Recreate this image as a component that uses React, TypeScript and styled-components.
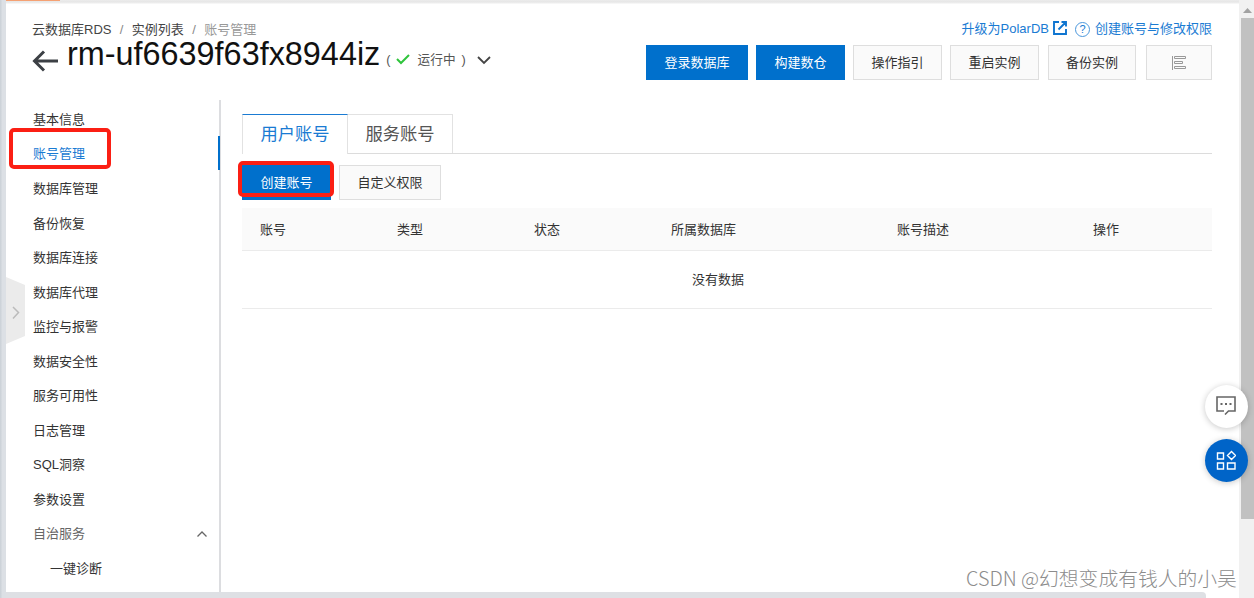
import React from 'react';
import styled, { createGlobalStyle, css } from 'styled-components';

const GlobalStyle = createGlobalStyle`
  * { box-sizing: border-box; }
  body {
    margin: 0;
    overflow: hidden;
    background: #fff;
    color: #333;
    font: 13px/18px "Liberation Sans", "Noto Sans CJK SC", sans-serif;
  }
`;

const Page = styled.div`
  position: relative;
  display: grid;
  grid-template-columns: 6px 1233px 15px;
  width: 1254px;
  height: 598px;
  overflow: hidden;
`;

const LeftRail = styled.div`
  background: linear-gradient(90deg, #cdd3d9 0, #cdd3d9 1px, #dce0e5 2px);
`;

const Main = styled.div`
  display: flex;
  flex-direction: column;
  min-width: 0;
`;

const TopEdge = styled.div`
  height: 4px;
  flex: none;
  background: linear-gradient(#ececec 0, #e6e6e6 2px, #fbfbfb 4px);
  &::before {
    content: '';
    display: block;
    width: 54px;
    height: 1px;
    background: #f5a173;
  }
`;

const Header = styled.header`
  display: flex;
  justify-content: space-between;
  height: 96px;
  flex: none;
  padding: 0 27px 0 26px;
`;

const HeaderInfo = styled.div`
  padding-top: 17px;
`;

const Breadcrumb = styled.nav`
  display: flex;
  height: 18px;
`;

const Crumb = styled.span<{ $last?: boolean }>`
  color: ${p => (p.$last ? '#999' : '#444')};
`;

const Slash = styled.span`
  width: 20.4px;
  text-align: center;
  color: #888;
`;

const TitleRow = styled.div`
  display: flex;
  height: 38px;
  svg { flex: none; }
`;

const BackIcon = styled.svg`
  margin-top: 11px;
`;

const Title = styled.h1`
  margin: -4px 0 0 9px;
  font-size: 32.4px;
  line-height: 38px;
  font-weight: 400;
  color: #111;
`;

const Status = styled.div`
  display: flex;
  align-items: center;
  height: 18px;
  margin: 12px 0 0 6px;
  font-size: 12.7px;
  color: #555;
  svg:first-of-type { margin: 0 8px 0 5px; }
  svg:last-of-type { margin-left: 11px; }
`;

const CloseParen = styled.span`
  margin-left: 6px;
`;

const HeaderActions = styled.div`
  display: flex;
  flex-direction: column;
  align-items: flex-end;
  padding-top: 16px;
`;

const Links = styled.div`
  display: flex;
  align-items: center;
  height: 18px;
  color: #1a7bd3;
  white-space: nowrap;
`;

const ExternalIcon = styled.svg`
  margin: -2px 8px 0 4px;
`;

const HelpIcon = styled.span`
  width: 15px;
  height: 15px;
  margin-right: 5px;
  border: 1px solid #4b97dc;
  border-radius: 50%;
  font-size: 11px;
  line-height: 13px;
  text-align: center;
`;

const ButtonRow = styled.div`
  display: flex;
  gap: 8px;
  margin-top: 7px;
`;

const Button = styled.button<{ $primary?: boolean; $width: number; $shift?: number }>`
  display: flex;
  align-items: center;
  justify-content: center;
  width: ${p => p.$width}px;
  height: 35px;
  margin: 0 0 0 ${p => p.$shift ?? 0}px;
  padding: 0;
  border: 1px solid #dedede;
  background: #fafafa;
  color: #333;
  font: inherit;
  ${p => p.$primary && css`
    border-color: #0070cc;
    background: #0070cc;
    color: #fff;
  `}
`;

const Body = styled.div`
  display: flex;
  flex: 1;
  min-height: 0;
`;

const Sidebar = styled.aside`
  width: 215px;
  padding-top: 2.6px;
  border-right: 2px solid #dcdde0;
`;

const NavItem = styled.a<{ $active?: boolean; $group?: boolean; $nested?: boolean }>`
  position: relative;
  display: flex;
  align-items: center;
  justify-content: space-between;
  height: 34.55px;
  padding: 0 11px 0 ${p => (p.$nested ? 44 : 27)}px;
  color: ${p => (p.$active ? '#1a7bd3' : p.$group ? '#666' : '#333')};
  ${p => p.$active && css`
    &::after {
      content: '';
      position: absolute;
      right: -1px;
      top: -1px;
      width: 2px;
      height: 34px;
      background: #0070cc;
    }
  `}
`;

const Content = styled.main`
  flex: 1;
  padding: 14px 27px 0 21px;
`;

const Tabs = styled.div`
  display: flex;
  height: 40px;
  border-bottom: 1px solid #dcdcdc;
`;

const Tab = styled.div<{ $active?: boolean }>`
  width: ${p => (p.$active ? 106 : 105)}px;
  height: ${p => (p.$active ? 40 : 39)}px;
  border: 1px solid #e2e2e2;
  border-width: 1px 1px 0 ${p => (p.$active ? 1 : 0)}px;
  border-top-color: ${p => (p.$active ? '#1a7bd3' : '#e2e2e2')};
  background: #fff;
  color: ${p => (p.$active ? '#1a7bd3' : '#555')};
  font-size: 17.3px;
  line-height: 39px;
  text-align: center;
`;

const Toolbar = styled.div`
  display: flex;
  gap: 8px;
  margin: 11px 0 8px;
`;

const Table = styled.table`
  width: 970px;
  table-layout: fixed;
  border-collapse: separate;
  border-spacing: 0;
`;

const HeadCell = styled.th<{ $width: number }>`
  width: ${p => p.$width}px;
  height: 43px;
  padding: 1px 0 0 18px;
  border-bottom: 1px solid #ebebeb;
  background: #fafafa;
  font-weight: 400;
  text-align: left;
`;

const EmptyCell = styled.td`
  height: 58px;
  padding: 0 18px 0 0;
  border-bottom: 1px solid #ebebeb;
  text-align: center;
`;

const BottomBar = styled.div`
  width: 1200px;
  height: 6px;
  flex: none;
  border-radius: 0 4px 0 0;
  background: #dee0e4;
`;

const Scrollbar = styled.div`
  display: flex;
  flex-direction: column;
  padding: 2px 0 0 2px;
  background: #f1f1f1;
`;

const ScrollArrow = styled.svg`
  flex: none;
`;

const ScrollThumb = styled.div`
  height: 501px;
  background: #c1c1c1;
`;

const Marker = styled.div<{ $x: number; $y: number; $w: number; $h: number }>`
  position: absolute;
  left: ${p => p.$x}px;
  top: ${p => p.$y}px;
  width: ${p => p.$w}px;
  height: ${p => p.$h}px;
  border: 4px solid #fb1f14;
  border-radius: 5px;
`;

const DrawerHandle = styled.svg`
  position: absolute;
  left: 6px;
  top: 277px;
`;

const Floating = styled.div<{ $primary?: boolean }>`
  position: absolute;
  left: 1205px;
  top: ${p => (p.$primary ? 439 : 385)}px;
  display: flex;
  align-items: center;
  justify-content: center;
  width: 43px;
  height: 43px;
  padding: 0 1px 2px 0;
  border-radius: 50%;
  background: ${p => (p.$primary ? '#0064c8' : '#fff')};
  box-shadow: 0 1px 6px rgba(0, 0, 0, 0.22);
`;

const Watermark = styled.div`
  position: absolute;
  left: 966px;
  top: 566px;
  font-family: "Noto Sans CJK SC", sans-serif;
  font-size: 19.8px;
  font-weight: 300;
  line-height: 24px;
  white-space: nowrap;
  color: #8c8c8c;
`;

const navItems = [
  '基本信息', '账号管理', '数据库管理', '备份恢复', '数据库连接', '数据库代理', '监控与报警',
  '数据安全性', '服务可用性', '日志管理', 'SQL洞察', '参数设置', '自治服务', '一键诊断',
];

const columns: [string, number][] = [
  ['账号', 137], ['类型', 137], ['状态', 137], ['所属数据库', 226], ['账号描述', 196], ['操作', 137],
];

export default function App() {
  return (
    <>
      <GlobalStyle />
      <Page>
        <LeftRail />
        <Main>
          <TopEdge />
          <Header>
            <HeaderInfo>
              <Breadcrumb>
                <Crumb>云数据库RDS</Crumb>
                <Slash>/</Slash>
                <Crumb>实例列表</Crumb>
                <Slash>/</Slash>
                <Crumb $last>账号管理</Crumb>
              </Breadcrumb>
              <TitleRow>
                <BackIcon width="26" height="22" fill="none" stroke="#3c4045" strokeWidth="3">
                  <path d="M26 11H2M12 1.500 2.500 11l9.500 9.500" />
                </BackIcon>
                <Title>rm-uf6639f63fx8944iz</Title>
                <Status>
                  <span>(</span>
                  <svg width="14" height="12" fill="none" stroke="#2fc43c" strokeWidth="2">
                    <path d="M1 5 5 9l8-8" />
                  </svg>
                  <span>运行中</span>
                  <CloseParen>)</CloseParen>
                  <svg width="14" height="10" fill="none" stroke="#444" strokeWidth="1.8">
                    <path d="m1 2 6 6 6-6" />
                  </svg>
                </Status>
              </TitleRow>
            </HeaderInfo>
            <HeaderActions>
              <Links>
                <span>升级为PolarDB</span>
                <ExternalIcon width="14" height="14" fill="none" stroke="#0f75d0" strokeWidth="1.9">
                  <path d="M6 1H1v12h12V8M8.500 1H13v4.500M13 1 5.500 8.500" />
                </ExternalIcon>
                <HelpIcon>?</HelpIcon>
                <span>创建账号与修改权限</span>
              </Links>
              <ButtonRow>
                <Button $primary $width={102}>登录数据库</Button>
                <Button $primary $width={89}>构建数仓</Button>
                <Button $width={89}>操作指引</Button>
                <Button $width={89}>重启实例</Button>
                <Button $width={88} $shift={1}>备份实例</Button>
                <Button $width={66} $shift={2}>
                  <svg width="14" height="14" fill="none" stroke="#999">
                    <path d="M.500 0v14M2.500 .500h11v2h-11zM2.500 5.500h8v2h-8zM2.500 10.500h11v2h-11z" />
                  </svg>
                </Button>
              </ButtonRow>
            </HeaderActions>
          </Header>
          <Body>
            <Sidebar>
              {navItems.map((label, i) => (
                <NavItem key={label} $active={i === 1} $group={i === 12} $nested={i === 13}>
                  {label}
                  {i === 12 && (
                    <svg width="12" height="8" fill="none" stroke="#666" strokeWidth="1.3">
                      <path d="m1.500 6.500 4.500-4.500 4.500 4.500" />
                    </svg>
                  )}
                </NavItem>
              ))}
            </Sidebar>
            <Content>
              <Tabs>
                <Tab $active>用户账号</Tab>
                <Tab>服务账号</Tab>
              </Tabs>
              <Toolbar>
                <Button $primary $width={89}>创建账号</Button>
                <Button $width={102}>自定义权限</Button>
              </Toolbar>
              <Table>
                <thead>
                  <tr>
                    {columns.map(([label, width]) => (
                      <HeadCell key={label} $width={width}>{label}</HeadCell>
                    ))}
                  </tr>
                </thead>
                <tbody>
                  <tr>
                    <EmptyCell colSpan={6}>没有数据</EmptyCell>
                  </tr>
                </tbody>
              </Table>
            </Content>
          </Body>
          <BottomBar />
        </Main>
        <Scrollbar>
          <ScrollArrow width="13" height="16">
            <path d="M2 11h9L6.500 6z" fill="#a2a2a2" />
          </ScrollArrow>
          <ScrollThumb />
        </Scrollbar>
        <DrawerHandle width="19" height="67">
          <path d="M0 0 19 8v51L0 67z" fill="#ebebeb" />
          <path d="m7 30 5.500 5.500L7 41.500" fill="none" stroke="#bbb" strokeWidth="1.5" />
        </DrawerHandle>
        <Marker $x={8.500} $y={127.500} $w={102} $h={41} />
        <Marker $x={237.500} $y={161} $w={96} $h={36} />
        <Floating>
          <svg width="20" height="19" fill="none" stroke="#666" strokeWidth="1.6">
            <path d="M8 15H1V1h18v14h-6.500L9 18.500" />
            <path d="M4.500 8h2m2.500 0h2m2.500 0h2" strokeWidth="2" />
          </svg>
        </Floating>
        <Floating $primary>
          <svg width="20" height="20" fill="none" stroke="#fff" strokeWidth="1.4">
            <path d="M1.500 3h6v6h-6zM1.500 13h6v6h-6zM11.500 13h7.500v6h-7.500zM15.500 1.500l4 4-4 4-4-4z" />
          </svg>
        </Floating>
        <Watermark>CSDN @幻想变成有钱人的小吴</Watermark>
      </Page>
    </>
  );
}
